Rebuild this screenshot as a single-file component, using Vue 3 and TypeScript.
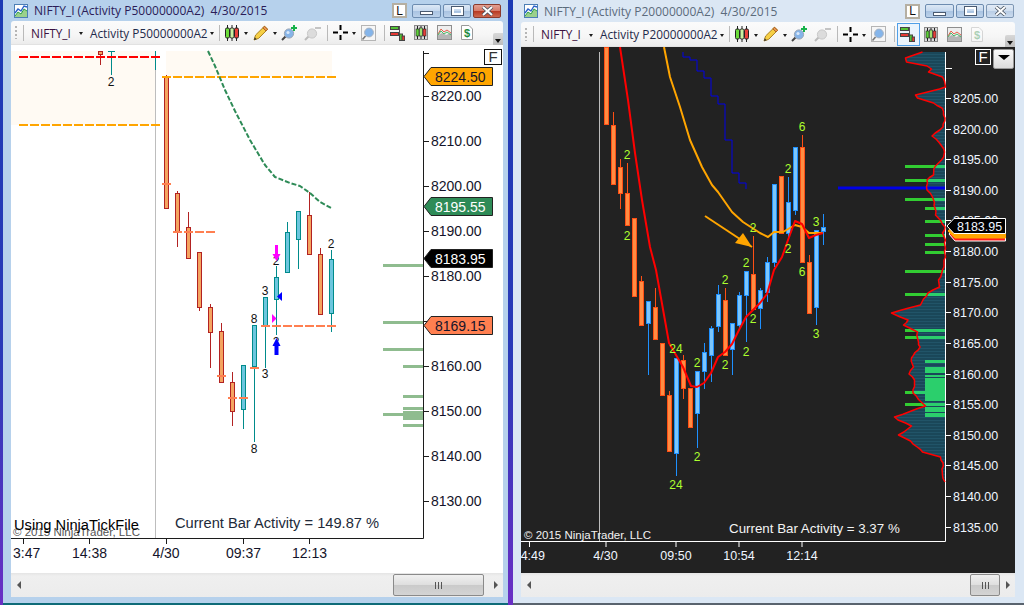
<template>
  <div class="desktop">
    <section v-for="win in windows" :key="win.symbolLabel" class="win" :class="{ dark: win.dark }">
      <header class="titlebar">
        <svg class="app-icon" width="14" height="14" viewBox="0 0 14 14">
          <rect x="0.5" y="0.5" width="13" height="13" fill="#fff" stroke="#4d7fb5" />
          <path d="M1 12 L4 8 L7 10 L10 5 L13 7 V13 H1Z" fill="#9bd08c" />
          <path d="M1 9 L4 5 L7 7 L10 2 L13 3" fill="none" stroke="#2a62c9" stroke-width="1.4" />
          <path d="M1 12 L4 8 L7 10 L10 5 L13 7" fill="none" stroke="#2ea043" />
        </svg>
        <span class="title-text">{{ win.title }}</span>
        <span class="l-btn">L</span>
        <span class="cap-btn min"><i /></span>
        <span class="cap-btn max"><i /></span>
        <span class="cap-btn close">
          <svg width="13" height="10" viewBox="0 0 13 10">
            <path d="M2 1 L11 9 M11 1 L2 9" stroke="#49535f" stroke-width="3.6" />
            <path d="M2 1 L11 9 M11 1 L2 9" stroke="#fff" stroke-width="2" />
          </svg>
        </span>
      </header>

      <nav class="toolbar">
        <i class="grip" />
        <i class="sep first" />
        <span class="tb-text symbol">NIFTY_I</span>
        <i class="caret" />
        <span class="tb-text account">{{ win.account }}</span>
        <i class="caret wide" />
        <i class="sep" />
        <svg class="tool t-candle" width="14" height="16" viewBox="0 0 14 16">
          <path d="M2.5 0v16M7 0v16M11.5 0v16" stroke="#222" />
          <rect x="0.5" y="3" width="4" height="10" rx="1.4" fill="#6bdc3a" stroke="#222" />
          <rect x="5" y="3" width="4" height="10" rx="1.4" fill="#c9f0a0" stroke="#222" />
          <rect x="9.5" y="3" width="4" height="10" rx="1.4" fill="#e8403a" stroke="#222" />
        </svg>
        <i class="caret" />
        <svg class="tool t-pencil" width="15" height="16" viewBox="0 0 15 16">
          <path d="M1 15 L2.6 10 L11.5 1.2 L14.6 4.3 L5.7 13.3Z" fill="#f6cf45" stroke="#a8801f" />
          <path d="M11.5 1.2 L14.6 4.3 L13 5.9 L9.9 2.8Z" fill="#ef9a55" stroke="#a8601f" />
          <path d="M1 15 L1.8 12.3 L3.7 14.2Z" fill="#333" />
        </svg>
        <i class="caret" />
        <svg class="tool t-zoomin" width="16" height="16" viewBox="0 0 16 16">
          <path d="M4.5 11.5 L1 15" stroke="#444" stroke-width="2" />
          <circle cx="8" cy="8.5" r="4.6" fill="#86b4e8" stroke="#9aa6b5" />
          <circle cx="7" cy="7.5" r="1.6" fill="#d8e8fa" />
          <path d="M13 0v6M10 3h6" stroke="#18b24a" stroke-width="2" />
        </svg>
        <svg class="tool t-zoomout" width="17" height="16" viewBox="0 0 17 16">
          <path d="M4.5 11.5 L1 15" stroke="#bbb" stroke-width="2" />
          <circle cx="8" cy="8.5" r="4.6" fill="#dcdcdc" stroke="#c8c8c8" />
          <path d="M11 3h6" stroke="#c4c4c4" stroke-width="2" />
        </svg>
        <i class="sep s-cross" />
        <svg class="tool t-cross" width="15" height="15" viewBox="0 0 15 15">
          <path d="M7.5 0v5M7.5 10v5M0 7.5h5M10 7.5h5" stroke="#000" stroke-width="2" />
        </svg>
        <i class="caret tight" />
        <svg class="tool t-mag" width="15" height="16" viewBox="0 0 15 16">
          <rect x="0.5" y="0.5" width="14" height="15" fill="#f6f6f6" stroke="#b5b5b5" />
          <path d="M4.5 11 L1.5 14.5" stroke="#777" stroke-width="1.6" />
          <circle cx="8" cy="7.5" r="4.4" fill="#85b5ea" stroke="#a5b2c2" />
        </svg>
        <i class="sep s-ind" />
        <span class="ind-wrap" :class="{ on: win.dark }">
          <svg width="15" height="16" viewBox="0 0 15 16">
            <path d="M9.5 1v15" stroke="#555" />
            <rect x="0.5" y="1.5" width="8" height="3" fill="#52c234" stroke="#444" />
            <rect x="0.5" y="7.5" width="8" height="3" fill="#e53935" stroke="#444" />
            <rect x="9.5" y="9" width="3" height="6.5" fill="#52c234" stroke="#444" />
            <rect x="12" y="11" width="2.6" height="4.5" fill="#e53935" stroke="#444" />
          </svg>
        </span>
        <svg class="tool t-box" width="14" height="15" viewBox="0 0 14 15">
          <rect x="0.5" y="0.5" width="13" height="14" fill="#dcdcdc" stroke="#8a8a8a" />
          <path d="M3.5 1v13M7 1v13M10.5 1v13" stroke="#222" />
          <rect x="2" y="4" width="3" height="7" fill="#5fd13a" stroke="#222" stroke-width="0.6" />
          <rect x="5.5" y="3" width="3" height="8" fill="#9fe070" stroke="#222" stroke-width="0.6" />
          <rect x="9" y="4" width="3" height="7" fill="#e8403a" stroke="#222" stroke-width="0.6" />
        </svg>
        <svg class="tool t-box" width="15" height="15" viewBox="0 0 15 15">
          <rect x="0.5" y="0.5" width="14" height="14" fill="#eee" stroke="#8e8e8e" />
          <path d="M1 14 V10 L5 8 L9 10 L14 8 V14Z" fill="#b5b5b5" />
          <path d="M1 9 L4 4 L7 7 L10 5 L14 8" fill="none" stroke="#e5604a" />
          <path d="M1 10 L4 6 L7 9 L10 7 L14 10" fill="none" stroke="#46b96a" />
        </svg>
        <svg class="tool t-box" :class="{ faded: win.dark }" width="12" height="15" viewBox="0 0 12 15">
          <path d="M0.5 0.5 H8 L11.5 4 V14.5 H0.5Z" fill="#fff" stroke="#9a9a9a" />
          <text x="6" y="12" class="dollar" text-anchor="middle">$</text>
        </svg>
        <span class="overflow"><i /></span>
      </nav>

      <div class="chart">
        <svg
          class="plot"
          :width="win.chart.width"
          :height="win.chart.height"
          :viewBox="`${win.chart.x} ${win.chart.y} ${win.chart.width} ${win.chart.height}`"
        >
          <defs v-if="win.chart.profile">
            <pattern id="stripes" width="4" height="3" patternUnits="userSpaceOnUse">
              <rect width="4" height="3" fill="#1a4759" />
              <rect width="4" height="1" fill="#215468" />
            </pattern>
            <clipPath id="profile-clip">
              <polygon :points="win.chart.profile.area" />
            </clipPath>
          </defs>

          <rect
            v-for="(r, i) in win.chart.shades"
            :key="`s${i}`"
            :x="r[0]"
            :y="r[1]"
            :width="r[2]"
            :height="r[3]"
            :fill="r[4]"
          />

          <g v-if="win.chart.profile">
            <polygon :points="win.chart.profile.area" fill="url(#stripes)" />
          </g>

          <path :d="win.chart.axes" :stroke="win.chart.axisColor" fill="none" />
          <path :d="win.chart.session" stroke="#bdbdbd" fill="none" />

          <g v-for="(c, i) in win.chart.candles" :key="`c${i}`" :stroke="c.stroke">
            <path :d="`M${c.x} ${c.hi}V${c.lo}`" fill="none" />
            <rect :x="c.x - 2" :y="c.top" width="4" :height="c.bottom - c.top" :fill="c.fill" />
          </g>

          <rect
            v-for="(r, i) in win.chart.bars"
            :key="`b${i}`"
            :x="r[0]"
            :y="r[1]"
            :width="r[2]"
            :height="r[3]"
            :fill="win.chart.barColor"
          />
          <g v-if="win.chart.profile" clip-path="url(#profile-clip)">
            <rect
              v-for="(r, i) in win.chart.bars"
              :key="`bp${i}`"
              :x="r[0]"
              :y="r[1]"
              :width="r[2]"
              :height="r[3]"
              fill="#2bcf6c"
            />
          </g>

          <polyline
            v-for="(l, i) in win.chart.lines"
            :key="`l${i}`"
            :points="l.points"
            :stroke="l.stroke"
            :stroke-width="l.width"
            :stroke-dasharray="l.dash"
            stroke-linejoin="round"
            fill="none"
          />

          <text
            v-for="(t, i) in win.chart.texts"
            :key="`t${i}`"
            :x="t.x"
            :y="t.y"
            :class="t.cls"
            :text-anchor="t.anchor"
          >{{ t.text }}</text>

          <polygon
            v-for="(p, i) in win.chart.shapes"
            :key="`p${i}`"
            :points="p.points"
            :fill="p.fill"
            :stroke="p.stroke"
          />

          <text
            v-for="(t, i) in win.chart.tagTexts"
            :key="`tt${i}`"
            :x="t.x"
            :y="t.y"
            :class="t.cls"
          >{{ t.text }}</text>
        </svg>
        <span class="f-btn">F</span>
        <span v-if="win.dark" class="panel-btn"><i /></span>
      </div>

      <footer class="scrollbar">
        <i class="arrow left" />
        <span class="thumb"><i /><i /><i /></span>
        <i class="arrow right" />
      </footer>
    </section>
  </div>
</template>

<script setup lang="ts">
interface TextItem {
  x: number
  y: number
  text: string
  cls: string
  anchor?: string
}

interface Shape {
  points: string
  fill: string
  stroke?: string
}

interface Line {
  points: string
  stroke: string
  width: number
  dash?: string
}

type Rect = [number, number, number, number, string?]
// top, bottom, wick top, wick bottom, rising
type CandleRow = [number, number, number, number, boolean]
type Pt = [number, number]

const toPoints = (pts: Pt[]) => pts.map((p) => p.join(',')).join(' ')

function buildCandles(rows: CandleRow[], x0: number, step: number, up: [string, string], down: [string, string]) {
  return rows.map(([top, bottom, hi, lo, rising], i) => ({
    x: x0 + i * step,
    top: top + 0.5,
    bottom: bottom + 0.5,
    hi,
    lo,
    stroke: rising ? up[0] : down[0],
    fill: rising ? up[1] : down[1]
  }))
}

function tag(y: number, tip: number, shoulder: number, right: number, half: number, fill: string, stroke: string): Shape {
  const points: Pt[] = [
    [tip, y],
    [shoulder, y - half],
    [right, y - half],
    [right, y + half],
    [shoulder, y + half]
  ]
  return { points: toPoints(points), fill, stroke }
}

// the volume profile curve is stepped, so break it into short jittered pieces
function roughen(pts: Pt[]): Pt[] {
  const out: Pt[] = []
  pts.forEach((p, i) => {
    const next = pts[i + 1]
    if (!next) {
      out.push(p)
      return
    }
    const n = Math.max(1, Math.round(Math.abs(next[1] - p[1]) / 3))
    for (let k = 0; k < n; k++) {
      const t = k / n
      const jitter = ((out.length * 7) % 3) - 1
      out.push([+(p[0] + (next[0] - p[0]) * t + jitter * 0.5).toFixed(1), +(p[1] + (next[1] - p[1]) * t).toFixed(1)])
    }
  })
  return out
}

// ---- left chart (light) ----
const leftRows: CandleRow[] = [
  [76, 208, 75, 208, false],
  [193, 232, 191, 247, false],
  [227, 258, 212, 258, false],
  [252, 307, 252, 311, false],
  [307, 332, 304, 368, false],
  [331, 382, 323, 382, false],
  [382, 411, 372, 426, false],
  [365, 409, 365, 429, true],
  [325, 366, 325, 442, true],
  [297, 326, 297, 368, true],
  [277, 299, 266, 335, true],
  [232, 272, 222, 272, true],
  [211, 239, 211, 269, true],
  [215, 254, 192, 254, false],
  [254, 314, 248, 314, false],
  [259, 313, 250, 332, true]
]

const leftPrices = [
  ['8220.00', 96],
  ['8210.00', 141],
  ['8200.00', 186],
  ['8190.00', 231],
  ['8180.00', 276],
  ['8170.00', 321],
  ['8160.00', 366],
  ['8150.00', 411],
  ['8140.00', 456],
  ['8130.00', 501]
] as const

const leftTimes = [
  { x: 23.5, text: '3:47', at: 13, anchor: 'start' },
  { x: 89.5, text: '14:38', at: 89.5, anchor: 'middle' },
  { x: 166.5, text: '4/30', at: 166, anchor: 'middle' },
  { x: 243.5, text: '09:37', at: 243.5, anchor: 'middle' },
  { x: 309.5, text: '12:13', at: 309.5, anchor: 'middle' }
]

const leftNumbers: [number, number, string][] = [
  [111, 86, '2'],
  [265, 295, '3'],
  [254, 323, '8'],
  [331, 248, '2'],
  [265, 378, '3'],
  [254, 453, '8'],
  [276, 265, '2'],
  [276, 346, '2']
]

const leftChart = {
  x: 11,
  y: 45,
  width: 492,
  height: 528,
  axisColor: '#1c1c1c',
  barColor: '#8fbc8f',
  profile: null as null | { area: string },
  shades: [
    [11, 51, 144, 74, '#fffaf3'],
    [166, 51, 166, 26, '#fffaf3']
  ] as Rect[],
  bars: [
    [383, 264, 40, 3],
    [383, 321, 40, 3],
    [383, 348, 40, 3],
    [403, 365, 20, 3],
    [403, 395, 20, 3],
    [403, 407, 20, 3],
    [403, 411, 20, 9],
    [383, 413, 20, 3],
    [403, 424, 20, 3]
  ] as Rect[],
  axes:
    'M423.5 51V538.5 M11 538.5H423.5 M423.5 53.5H429' +
    leftPrices.map((p) => `M423.5 ${p[1] + 0.5}H429`).join('') +
    leftTimes.map((t) => `M${t.x} 539V544`).join(''),
  session: 'M155.5 70V538',
  candles: [
    ...buildCandles(leftRows, 166.5, 11, ['#008b8b', '#6cc6de'], ['#b22222', '#f4a460']),
    { x: 100.5, top: 51.5, bottom: 54.5, hi: 51, lo: 65, stroke: '#b22222', fill: '#f4a460' }
  ],
  lines: [
    { points: '108,51.5 115,51.5', stroke: '#008b8b', width: 1 },
    { points: '111.5,51 111.5,75', stroke: '#008b8b', width: 1 },
    { points: '155.5,51 155.5,70', stroke: '#008b8b', width: 1 },
    { points: '19,57 160,57', stroke: '#ff0000', width: 2, dash: '9 2' },
    { points: '19,125 160,125', stroke: '#ffa500', width: 2, dash: '9 2' },
    { points: '162,77 336,77', stroke: '#ffa500', width: 2, dash: '9 2' },
    { points: '162,184 171,184', stroke: '#ff7f50', width: 2 },
    { points: '173,232 215,232', stroke: '#ff7f50', width: 2, dash: '9 2' },
    { points: '217,376 226,376', stroke: '#ff7f50', width: 2 },
    { points: '228,398 248,398', stroke: '#ff7f50', width: 2, dash: '9 2' },
    { points: '250,368 259,368', stroke: '#ff7f50', width: 2 },
    { points: '261,326 336,326', stroke: '#ff7f50', width: 2, dash: '9 2' },
    {
      points: toPoints([
        [208, 51],
        [215, 66],
        [225, 90],
        [235, 111],
        [250, 140],
        [265, 165],
        [275, 177],
        [290, 183],
        [300, 186],
        [310, 193],
        [320, 202],
        [331, 208]
      ]),
      stroke: '#2e8b57',
      width: 2,
      dash: '5 2'
    }
  ] as Line[],
  texts: [
    ...leftPrices.map((p) => ({ x: 431, y: p[1] + 5, text: p[0], cls: 'axis-l' })),
    ...leftTimes.map((t) => ({ x: t.at, y: 558, text: t.text, cls: 'axis-l', anchor: t.anchor })),
    ...leftNumbers.map((n) => ({ x: n[0], y: n[1], text: n[2], cls: 'num-l', anchor: 'middle' })),
    { x: 13, y: 536, text: '© 2015 NinjaTrader, LLC', cls: 'copy-l' },
    { x: 14, y: 530, text: 'Using NinjaTickFile', cls: 'big-l' },
    { x: 175, y: 528, text: 'Current Bar Activity = 149.87 %', cls: 'big-l ink' }
  ] as TextItem[],
  shapes: [
    tag(76.5, 424, 431, 492.5, 9, '#ffa500', '#222'),
    tag(206.5, 424, 431, 492.5, 9, '#2e8b57', '#222'),
    tag(258.5, 424, 431, 492.5, 9, '#000', '#222'),
    tag(325.5, 424, 431, 492.5, 9, '#ff7f50', '#222'),
    { points: '275,245 278,245 278,254 280.5,254 276.5,261 272.5,254 275,254', fill: '#ff00ff' },
    { points: '276.5,338 280.5,346 278.5,346 278.5,355 274.5,355 274.5,346 272.5,346', fill: '#0000ff' },
    { points: '277,296.5 282,292 282,301', fill: '#0000ff' },
    { points: '272,314 276.5,318.5 272,323', fill: '#ff00ff' }
  ] as Shape[],
  tagTexts: [
    { x: 435, y: 82, text: '8224.50', cls: 'axis-l' },
    { x: 435, y: 212, text: '8195.55', cls: 'axis-l wht' },
    { x: 435, y: 264, text: '8183.95', cls: 'axis-l wht' },
    { x: 435, y: 331, text: '8169.15', cls: 'axis-l' }
  ] as TextItem[]
}

// ---- right chart (dark) ----
const rightRows: CandleRow[] = [
  [47, 124, 47, 124, false],
  [125, 184, 112, 184, false],
  [167, 193, 159, 209, false],
  [193, 225, 163, 225, false],
  [218, 296, 218, 296, false],
  [281, 325, 276, 325, false],
  [301, 323, 301, 375, true],
  [307, 339, 288, 339, false],
  [343, 395, 343, 395, false],
  [395, 451, 391, 451, false],
  [358, 453, 358, 476, true],
  [360, 388, 355, 399, false],
  [388, 427, 388, 427, false],
  [371, 413, 371, 448, true],
  [352, 371, 343, 389, true],
  [328, 355, 326, 382, true],
  [294, 326, 285, 332, true],
  [300, 355, 288, 355, false],
  [323, 349, 323, 375, true],
  [295, 325, 292, 330, true],
  [271, 295, 271, 342, true],
  [274, 309, 236, 309, false],
  [290, 308, 288, 329, true],
  [262, 292, 257, 302, true],
  [184, 262, 184, 267, true],
  [176, 233, 176, 233, false],
  [202, 233, 177, 240, true],
  [147, 210, 147, 215, true],
  [147, 262, 135, 262, false],
  [262, 313, 255, 313, false],
  [230, 307, 230, 325, true],
  [227, 231, 214, 245, true]
]

const rightPrices: [string, number][] = [
  ['8205.00', 98],
  ['8200.00', 129],
  ['8195.00', 159],
  ['8190.00', 190],
  ['8185.00', 220],
  ['8180.00', 251],
  ['8175.00', 282],
  ['8170.00', 312],
  ['8165.00', 343],
  ['8160.00', 374],
  ['8155.00', 404],
  ['8150.00', 435],
  ['8145.00', 465],
  ['8140.00', 496],
  ['8135.00', 527]
]

const rightTimes = [
  { x: 529.5, text: '4:49', at: 545, anchor: 'end' },
  { x: 606, text: '4/30', at: 605.5, anchor: 'middle' },
  { x: 676, text: '09:50', at: 676, anchor: 'middle' },
  { x: 739, text: '10:54', at: 739, anchor: 'middle' },
  { x: 802, text: '12:14', at: 802, anchor: 'middle' }
]

const rightNumbers: [number, number, string][] = [
  [627, 159, '2'],
  [627, 240, '2'],
  [753, 232, '2'],
  [802, 131, '6'],
  [788, 173, '2'],
  [816, 226, '3'],
  [788, 253, '2'],
  [802, 276, '6'],
  [746, 267, '2'],
  [725, 284, '2'],
  [676, 353, '24'],
  [697, 367, '2'],
  [725, 369, '2'],
  [753, 323, '2'],
  [746, 356, '2'],
  [697, 461, '2'],
  [676, 489, '24'],
  [816, 338, '3']
]

const profileCurve = roughen([
  [923, 52], [905, 58], [907, 62], [927, 66], [931, 69], [929, 72], [942, 77], [945, 81],
  [945, 87], [940, 89], [915, 95], [918, 98], [933, 103], [942, 108], [945, 118], [943, 127],
  [932, 136], [940, 143], [945, 152], [942, 160], [935, 166], [933, 175], [927, 180], [927, 190],
  [933, 197], [935, 208], [936, 215], [945, 227], [943, 233], [945, 240], [945, 257], [943, 270],
  [939, 280], [939, 287], [928, 293], [920, 305], [891, 313], [908, 320], [904, 325], [917, 332],
  [918, 342], [920, 347], [911, 358], [913, 367], [909, 374], [915, 380], [913, 393], [925, 406],
  [895, 417], [898, 420], [912, 426], [899, 435], [910, 441], [923, 452], [940, 457], [943, 463],
  [942, 475], [945, 482]
])

const rightChart = {
  x: 521,
  y: 47,
  width: 494,
  height: 526,
  axisColor: '#ffffff',
  barColor: '#32cd32',
  profile: { area: toPoints([[945, 52], ...profileCurve, [945, 482]]) } as null | { area: string },
  shades: [] as Rect[],
  bars: [
    [905, 165, 40, 3],
    [905, 179, 40, 3],
    [905, 198, 40, 3],
    [925, 207, 20, 3],
    [925, 220, 20, 3],
    [925, 234, 20, 3],
    [925, 243, 20, 3],
    [925, 251, 20, 3],
    [905, 270, 40, 3],
    [905, 293, 40, 3],
    [905, 329, 40, 3],
    [905, 336, 40, 3],
    [925, 360, 20, 3],
    [925, 367, 20, 6],
    [925, 375, 20, 2],
    [925, 378, 20, 23],
    [905, 391, 20, 3],
    [905, 403, 40, 3],
    [925, 407, 20, 5],
    [925, 413, 20, 4]
  ] as Rect[],
  axes:
    'M945.5 52V541.5 M521 541.5H945.5 M945.5 68.5H952' +
    rightPrices.map((p) => `M945.5 ${p[1] + 0.5}H951`).join('') +
    rightTimes.map((t) => `M${t.x} 542V547`).join(''),
  session: 'M599.5 52V541',
  candles: buildCandles(rightRows, 606.5, 7, ['#1e90ff', '#7cc6fb'], ['#ff4f14', '#ff8c42']),
  lines: [
    {
      points: toPoints([
        [683, 52], [683, 57], [690, 57], [690, 60], [697, 60], [697, 71], [704, 71], [704, 78],
        [711, 78], [711, 96], [718, 96], [718, 104], [725, 104], [725, 140], [732, 140],
        [732, 173], [739, 173], [739, 183], [746, 183], [746, 189]
      ]),
      stroke: '#0000e6',
      width: 1
    },
    { points: '838,188 945,188', stroke: '#0000e6', width: 3 },
    {
      points: toPoints([
        [664, 47], [670, 77], [680, 107], [690, 140], [702, 167], [712, 185], [718, 192], [732, 212],
        [743, 222], [760, 233], [768, 237], [774, 232], [783, 232], [795, 225], [802, 227], [809, 233],
        [823, 233]
      ]),
      stroke: '#ffa500',
      width: 2
    },
    {
      points: toPoints([
        [620, 47], [628, 100], [635, 153], [642, 200], [650, 247], [656, 270], [669, 343], [683, 367],
        [691, 386], [697, 387], [704, 383], [711, 373], [718, 357], [725, 352], [732, 344], [739, 330],
        [746, 317], [753, 310], [760, 303], [767, 294], [774, 270], [782, 257], [788, 240], [795, 221],
        [802, 224], [809, 238], [816, 235], [823, 233]
      ]),
      stroke: '#ff0000',
      width: 2
    },
    { points: '705,216 752,247', stroke: '#ffa500', width: 2 },
    { points: toPoints(profileCurve), stroke: '#ff0000', width: 1.5 }
  ] as Line[],
  texts: [
    ...rightPrices.map((p) => ({ x: 953, y: p[1] + 4.5, text: p[0], cls: 'axis-r' })),
    ...rightTimes.map((t) => ({ x: t.at, y: 560, text: t.text, cls: 'axis-r', anchor: t.anchor })),
    ...rightNumbers.map((n) => ({ x: n[0], y: n[1], text: n[2], cls: 'num-r', anchor: 'middle' })),
    { x: 524, y: 539, text: '© 2015 NinjaTrader, LLC', cls: 'copy-r' },
    { x: 729, y: 533, text: 'Current Bar Activity = 3.37 %', cls: 'big-r' }
  ] as TextItem[],
  shapes: [
    { points: '743,233 735,243 752,247', fill: '#ffa500' },
    tag(234, 949, 955, 1005.5, 7, '#ff1a1a', '#fff'),
    tag(231, 948, 955, 1005.5, 7, '#ffa500', '#ffa500'),
    tag(226, 947, 954, 1005.5, 7.5, '#000', '#fff')
  ] as Shape[],
  tagTexts: [{ x: 957, y: 230.5, text: '8183.95', cls: 'axis-r' }] as TextItem[]
}

const windows = [
  {
    dark: false,
    symbolLabel: 'P50000000A2',
    title: 'NIFTY_I (Activity P50000000A2)  4/30/2015',
    account: 'Activity P50000000A2',
    chart: leftChart
  },
  {
    dark: true,
    symbolLabel: 'P20000000A2',
    title: 'NIFTY_I (Activity P20000000A2)  4/30/2015',
    account: 'Activity P20000000A2',
    chart: rightChart
  }
]
</script>

<style scoped>
.desktop {
  display: flex;
  width: 1024px;
  height: 605px;
  overflow: hidden;
  background: linear-gradient(180deg, #1c3ab4 0%, #2a3ab8 60%, #6a2fc4 100%);
}

.win {
  display: flex;
  flex-direction: column;
  box-sizing: border-box;
  width: 505px;
  height: 605px;
  margin-left: 3px;
  padding: 0 5px 6px 8px;
  background: #b6d1ec;
  border-bottom: 2px solid #0e6b78;
  font-family: "Open Sans", "Liberation Sans", sans-serif;
}

.win.dark {
  width: 511px;
  margin-left: 5px;
  padding-right: 9px;
  background: #dbe7f4;
  border-bottom-color: #59636e;
}

.titlebar {
  display: flex;
  align-items: center;
  height: 21px;
  flex: none;
  padding-right: 2px;
}

.dark .titlebar {
  height: 22px;
  padding-right: 1px;
}

.app-icon {
  margin-left: 3px;
}

.title-text {
  margin-left: 6px;
  font-size: 12px;
  white-space: pre;
  color: #2b1c58;
}

.dark .title-text {
  color: #5c6b7c;
}

.l-btn {
  display: flex;
  align-items: center;
  justify-content: center;
  box-sizing: border-box;
  width: 15px;
  height: 15px;
  margin-left: auto;
  border: 2px solid #b5afa2;
  background: #fff;
  font: 12px "Liberation Sans", sans-serif;
  color: #111;
}

.cap-btn {
  display: flex;
  align-items: center;
  justify-content: center;
  box-sizing: border-box;
  width: 28px;
  height: 14px;
  margin-left: 2px;
  border: 1px solid #6d8cb0;
  border-radius: 2px;
  background: linear-gradient(180deg, #dce8f5 0%, #c5d8ee 50%, #a9c3e2 52%, #bcd2ea 100%);
}

.min {
  width: 29px;
  margin-left: 5px;
}

.min i {
  display: block;
  box-sizing: border-box;
  width: 13px;
  height: 4px;
  margin-top: 5px;
  background: #fff;
  border: 1px solid #4a5a70;
}

.max i {
  display: block;
  box-sizing: border-box;
  width: 11px;
  height: 8px;
  background: transparent;
  border: 2px solid #fff;
  outline: 1px solid #4a5a70;
}

.close {
  background: linear-gradient(180deg, #e3a092 0%, #d67a68 50%, #b83a22 52%, #cc6a50 100%);
  border-color: #8a3a2c;
}

.dark .close {
  background: linear-gradient(180deg, #e2ebf6 0%, #cfdeef 50%, #b9cde6 52%, #cadbee 100%);
  border-color: #7e97b4;
}

.toolbar {
  display: flex;
  align-items: center;
  height: 24px;
  flex: none;
  position: relative;
  border-radius: 3px 3px 0 0;
  background: linear-gradient(180deg, #fbfbfb 0%, #f6f6f6 60%, #ececec 100%);
  border-bottom: 1px solid #e2e2e2;
  box-sizing: border-box;
}

.dark .toolbar {
  height: 25px;
}

.grip {
  width: 2px;
  height: 13px;
  margin-left: 4px;
  background: repeating-linear-gradient(180deg, #b5b5b5 0 2px, transparent 2px 4px);
}

.sep {
  width: 1px;
  height: 16px;
  margin-left: 5px;
  background: #b9b9b9;
}

.sep.first {
  margin-left: 6px;
}

.s-cross {
  margin-left: 6px;
}

.s-ind {
  margin-left: 8px;
}

.tb-text {
  font-size: 11.8px;
  white-space: nowrap;
  color: #1f2a4a;
}

.symbol {
  width: 41px;
  margin-left: 7px;
  color: #3a1040;
}

.account {
  width: 112px;
  margin-left: 7px;
}

.caret {
  width: 0;
  height: 0;
  margin-left: 7px;
  margin-top: 2px;
  border-style: solid;
  border-width: 3px 2.5px 0;
  border-color: #1c1c1c transparent transparent;
}

.caret.wide {
  margin-left: 8px;
}

.caret.tight {
  margin-left: 4px;
}

.tool {
  flex: none;
}

.t-candle {
  margin-left: 5px;
}

.t-candle + .caret,
.t-pencil + .caret {
  margin-left: 5px;
}

.t-pencil {
  margin-left: 5px;
}

.t-zoomin {
  margin-left: 4px;
}

.t-zoomout {
  margin-left: 7px;
}

.t-cross {
  margin-left: 5px;
}

.t-mag {
  margin-left: 5px;
}

.t-box {
  margin-left: 9px;
}

.faded {
  opacity: 0.35;
}

.dollar {
  font: bold 11px "Liberation Sans", sans-serif;
  fill: #1d8a3c;
}

.ind-wrap {
  position: relative;
  display: block;
  width: 15px;
  height: 16px;
  margin-left: 5px;
}

.ind-wrap svg {
  position: relative;
  z-index: 1;
  display: block;
}

.ind-wrap.on::before {
  content: '';
  position: absolute;
  left: -3px;
  top: -3px;
  width: 21px;
  height: 21px;
  border: 1px solid #4f9fe8;
  background: #eaf4fd;
}

.overflow {
  position: absolute;
  right: 0;
  bottom: -1px;
  display: flex;
  align-items: flex-end;
  justify-content: center;
  width: 10px;
  height: 12px;
  padding-bottom: 2px;
  box-sizing: border-box;
  background: linear-gradient(180deg, #d8d8d8, #bdbdbd);
  border-radius: 2px 0 0 0;
}

.overflow i {
  width: 0;
  height: 0;
  border-style: solid;
  border-width: 4px 3.5px 0;
  border-color: #111 transparent transparent;
}

.chart {
  position: relative;
  flex: 1;
  background: #fff;
  overflow: hidden;
}

.dark .chart {
  background: #222;
}

.plot {
  display: block;
}

.f-btn {
  position: absolute;
  top: 4px;
  right: 1px;
  box-sizing: border-box;
  width: 18px;
  height: 16px;
  border: 1px solid #111;
  background: #fff;
  color: #333;
  font: 15px/14px "Liberation Sans", sans-serif;
  text-align: center;
}

.dark .f-btn {
  top: 2px;
  right: 24px;
  width: 16px;
  border-color: #fff;
  background: #222;
  color: #fff;
}

.panel-btn {
  position: absolute;
  top: 2px;
  right: 1px;
  display: flex;
  align-items: center;
  justify-content: center;
  box-sizing: border-box;
  width: 21px;
  height: 20px;
  border: 1px solid #999;
  border-radius: 2px;
  background: linear-gradient(180deg, #fafafa, #dcdcdc);
}

.panel-btn i {
  width: 0;
  height: 0;
  margin-bottom: 3px;
  border-style: solid;
  border-width: 5px 6px 0;
  border-color: #000 transparent transparent;
}

.scrollbar {
  display: flex;
  align-items: center;
  flex: none;
  box-sizing: border-box;
  height: 24px;
  padding: 0 5px 0 6px;
  background: linear-gradient(180deg, #e4e4e4 0, #efefef 3px, #ececec 100%);
}

.arrow {
  width: 0;
  height: 0;
  border-style: solid;
  border-color: transparent;
}

.arrow.left {
  border-width: 4px 4px 4px 0;
  border-right-color: #555;
}

.arrow.right {
  margin-left: auto;
  border-width: 4px 0 4px 4px;
  border-left-color: #555;
}

.thumb {
  display: flex;
  align-items: center;
  justify-content: center;
  gap: 2px;
  box-sizing: border-box;
  width: 91px;
  height: 22px;
  margin-left: 372px;
  border: 1px solid #8a8a8a;
  border-radius: 2px;
  background: linear-gradient(180deg, #f0f0f0 0%, #dedede 50%, #cacaca 52%, #d4d4d4 100%);
}

.dark .thumb {
  width: 30px;
  margin-left: 439px;
}

.thumb i {
  width: 1px;
  height: 7px;
  background: #555;
}

.axis-l {
  font: 14px "Liberation Sans", sans-serif;
  fill: #14142a;
}

.axis-l.wht {
  fill: #fff;
}

.num-l {
  font: 12px "Liberation Sans", sans-serif;
  fill: #111;
}

.copy-l {
  font: 11.5px "Liberation Sans", sans-serif;
  fill: #555;
}

.big-l {
  font: 14.67px "Liberation Sans", sans-serif;
  fill: #000;
}

.big-l.ink {
  fill: #222a3a;
}

.axis-r {
  font: 12.5px "Liberation Sans", sans-serif;
  fill: #f0f6ff;
}

.num-r {
  font: 12px "Liberation Sans", sans-serif;
  fill: #adff2f;
}

.copy-r {
  font: 11.5px "Liberation Sans", sans-serif;
  fill: #f2f2f2;
}

.big-r {
  font: 13.33px "Liberation Sans", sans-serif;
  fill: #f4f4f4;
}
</style>
